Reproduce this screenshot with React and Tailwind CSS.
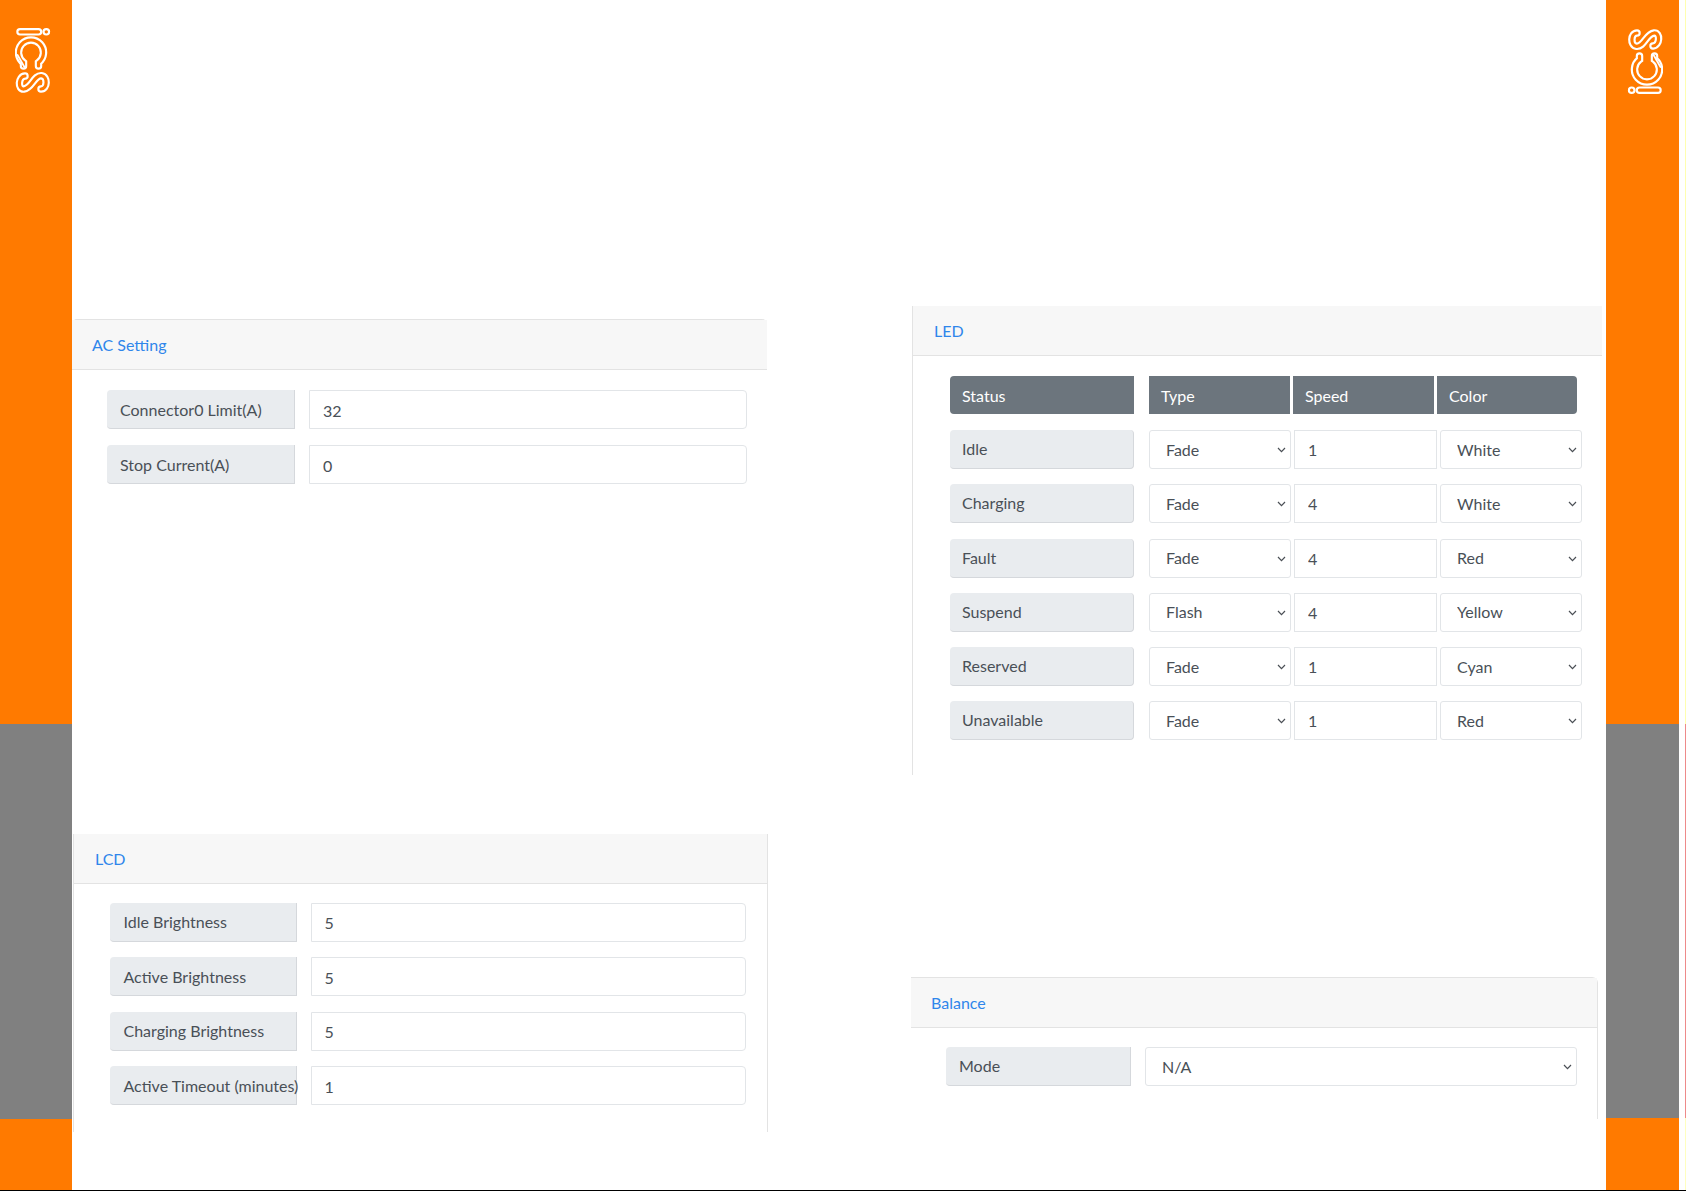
import React from "react";

const labelCls =
  "flex h-[39px] shrink-0 items-center whitespace-nowrap rounded-l-[4px] border-b border-r border-[#d5d8dc] bg-[#e9ecef] pl-[13px] text-[#495057]";
const inputCls =
  "h-[39px] rounded-r-[4px] border border-[#e2e5e8] bg-white px-[13px] pt-[1px] text-[#495057] outline-none";

function Logo({ className }) {
  const i = "M20 31.8 H38.5 M46.2 31.8 H46.4";
  const c = "M23.5 66 L23.5 62.5 A 12.5 12.5 0 1 1 38.5 62.5 L38.5 66";
  const s = "M41 89 C47.5 89 48 76.5 41.5 75.7 C34 75 32 88 24 89 C17.5 89.7 18 76.5 25 76";
  return (
    <svg className={className} width="36" height="70" viewBox="15 26 36 70" fill="none" strokeLinecap="round">
      <g stroke="#ffffff" strokeWidth="7.5">
        <path d={i} />
        <path d={c} />
        <path d={s} />
      </g>
      <g stroke="#ff7a00" strokeWidth="3.2">
        <path d={i} />
        <path d={c} />
        <path d={s} />
      </g>
      <path d="M17.5 55 L25 68" stroke="#ffffff" strokeWidth="1.8" />
    </svg>
  );
}

function Rail({ width, grayHeight, logoClass, flip }) {
  return (
    <div className={`flex shrink-0 flex-col ${width}`}>
      <div className={`h-[724px] bg-[#ff7a00] pt-[26px] ${logoClass}`}>
        <Logo className={flip ? "rotate-180" : ""} />
      </div>
      <div className={`bg-[#808080] ${grayHeight}`}></div>
      <div className="flex-1 bg-[#ff7a00]"></div>
    </div>
  );
}

function CardHeader({ title, pad }) {
  return (
    <div className={`flex h-[50px] items-center border-b border-[#e3e3e3] bg-[#f7f7f7] pt-[1px] text-[#2f86eb] ${pad}`}>
      {title}
    </div>
  );
}

function Row({ label, value, labelW, inputW, gap, labelPad = "" }) {
  return (
    <div className={`flex ${gap}`}>
      <div className={`${labelCls} pt-[1px] ${labelW} ${labelPad}`}>{label}</div>
      <input className={`${inputCls} ${inputW}`} defaultValue={value} readOnly />
    </div>
  );
}

function Pick({ value, w }) {
  return (
    <div className={`relative h-[39px] ${w}`}>
      <select className="h-full w-full appearance-none rounded-[3px] border border-[#e2e5e8] bg-white pl-[16px] text-[#495057] outline-none" defaultValue={value}>
        <option>{value}</option>
      </select>
      <svg className="absolute right-[5px] top-[17px]" width="9" height="6" viewBox="0 0 9 6" fill="none" stroke="#4a4f55" strokeWidth="1.2">
        <path d="M1 1 L4.5 4.6 L8 1" />
      </svg>
    </div>
  );
}

const ledRows = [
  ["Idle", "Fade", "1", "White"],
  ["Charging", "Fade", "4", "White"],
  ["Fault", "Fade", "4", "Red"],
  ["Suspend", "Flash", "4", "Yellow"],
  ["Reserved", "Fade", "1", "Cyan"],
  ["Unavailable", "Fade", "1", "Red"],
];

function App() {
  return (
    <div className="flex h-[1192px] w-[1686px] flex-col overflow-hidden bg-white font-['Lato',sans-serif] text-[16px]">
      <div className="flex h-[1190px]">
        <Rail width="w-[72px]" grayHeight="h-[395px]" logoClass="pl-[15px]" />

        {/* left column */}
        <div className="w-[696px] shrink-0 pt-[319px]">
          <div className="h-[515px] w-[695px]">
            <div className="rounded-t-[5px] border-t border-[#e3e3e3]">
              <CardHeader title="AC Setting" pad="pl-[20px]" />
            </div>
            <div className="flex flex-col gap-[16px] pl-[35px] pt-[20px]">
              <Row label="Connector0 Limit(A)" value="32" labelW="w-[188px]" inputW="w-[438px]" gap="gap-[14px]" />
              <Row label="Stop Current(A)" value="0" labelW="w-[188px]" inputW="w-[438px]" gap="gap-[14px]" />
            </div>
          </div>

          <div className="ml-[1px] h-[298px] w-[695px] border-x border-[#e3e3e3]">
            <CardHeader title="LCD" pad="pl-[21px]" />
            <div className="flex flex-col gap-[15.5px] pl-[35.5px] pt-[18.5px]">
              {[
                ["Idle Brightness", "5"],
                ["Active Brightness", "5"],
                ["Charging Brightness", "5"],
                ["Active Timeout (minutes)", "1"],
              ].map(([label, value]) => (
                <Row key={label} label={label} value={value} labelW="w-[187px]" inputW="w-[435px]" gap="gap-[14px]" labelPad="!pl-[14px]" />
              ))}
            </div>
          </div>
        </div>

        {/* right column */}
        <div className="ml-[143px] w-[695px] shrink-0 pt-[306px]">
          <div className="ml-[1px] h-[469px] w-[690px] border-l border-[#e3e3e3]">
            <CardHeader title="LED" pad="pl-[21px]" />
            <div className="pl-[37px] pt-[20px]">
              <div className="flex h-[38px] text-white">
                <div className="flex w-[184px] items-center rounded-l-[4px] bg-[#6c757d] pl-[12px] pt-[1px]">Status</div>
                <div className="ml-[15px] flex w-[141px] items-center bg-[#6c757d] pl-[12px] pt-[1px]">Type</div>
                <div className="ml-[3px] flex w-[141px] items-center bg-[#6c757d] pl-[12px] pt-[1px]">Speed</div>
                <div className="ml-[3px] flex w-[140px] items-center rounded-r-[4px] bg-[#6c757d] pl-[12px] pt-[1px]">Color</div>
              </div>
              <div className="mt-[16px] flex flex-col gap-[15.3px]">
                {ledRows.map(([status, type, speed, color]) => (
                  <div key={status} className="flex">
                    <div className={`${labelCls} w-[184px] rounded-[4px] !pl-[12px]`}>{status}</div>
                    <div className="ml-[15px] flex gap-[3px]">
                      <Pick value={type} w="w-[142px]" />
                      <input className="h-[39px] w-[143px] border border-[#e2e5e8] bg-white px-[13px] text-[#495057] outline-none" defaultValue={speed} readOnly />
                      <Pick value={color} w="w-[142px]" />
                    </div>
                  </div>
                ))}
              </div>
            </div>
          </div>

          <div className="mt-[202px] h-[142px] w-[687px] rounded-tr-[6px] border-r border-t border-[#e3e3e3]">
            <CardHeader title="Balance" pad="pl-[20px]" />
            <div className="flex gap-[14px] pl-[35px] pt-[19px]">
              <div className={`${labelCls} w-[185px]`}>Mode</div>
              <Pick value="N/A" w="w-[432px]" />
            </div>
          </div>
        </div>

        <Rail width="w-[73px]" grayHeight="h-[394px]" logoClass="pl-[21px]" flip />

        {/* thin screen-edge line */}
        <div className="ml-[6px] flex w-[1px] flex-col">
          <div className="h-[724px] bg-[#ffffb0]"></div>
          <div className="h-[394px] bg-[#ee8a8a]"></div>
          <div className="flex-1 bg-[#ffffc0]"></div>
        </div>
      </div>
      <div className="h-[1px] bg-black"></div>
    </div>
  );
}

export default App;
